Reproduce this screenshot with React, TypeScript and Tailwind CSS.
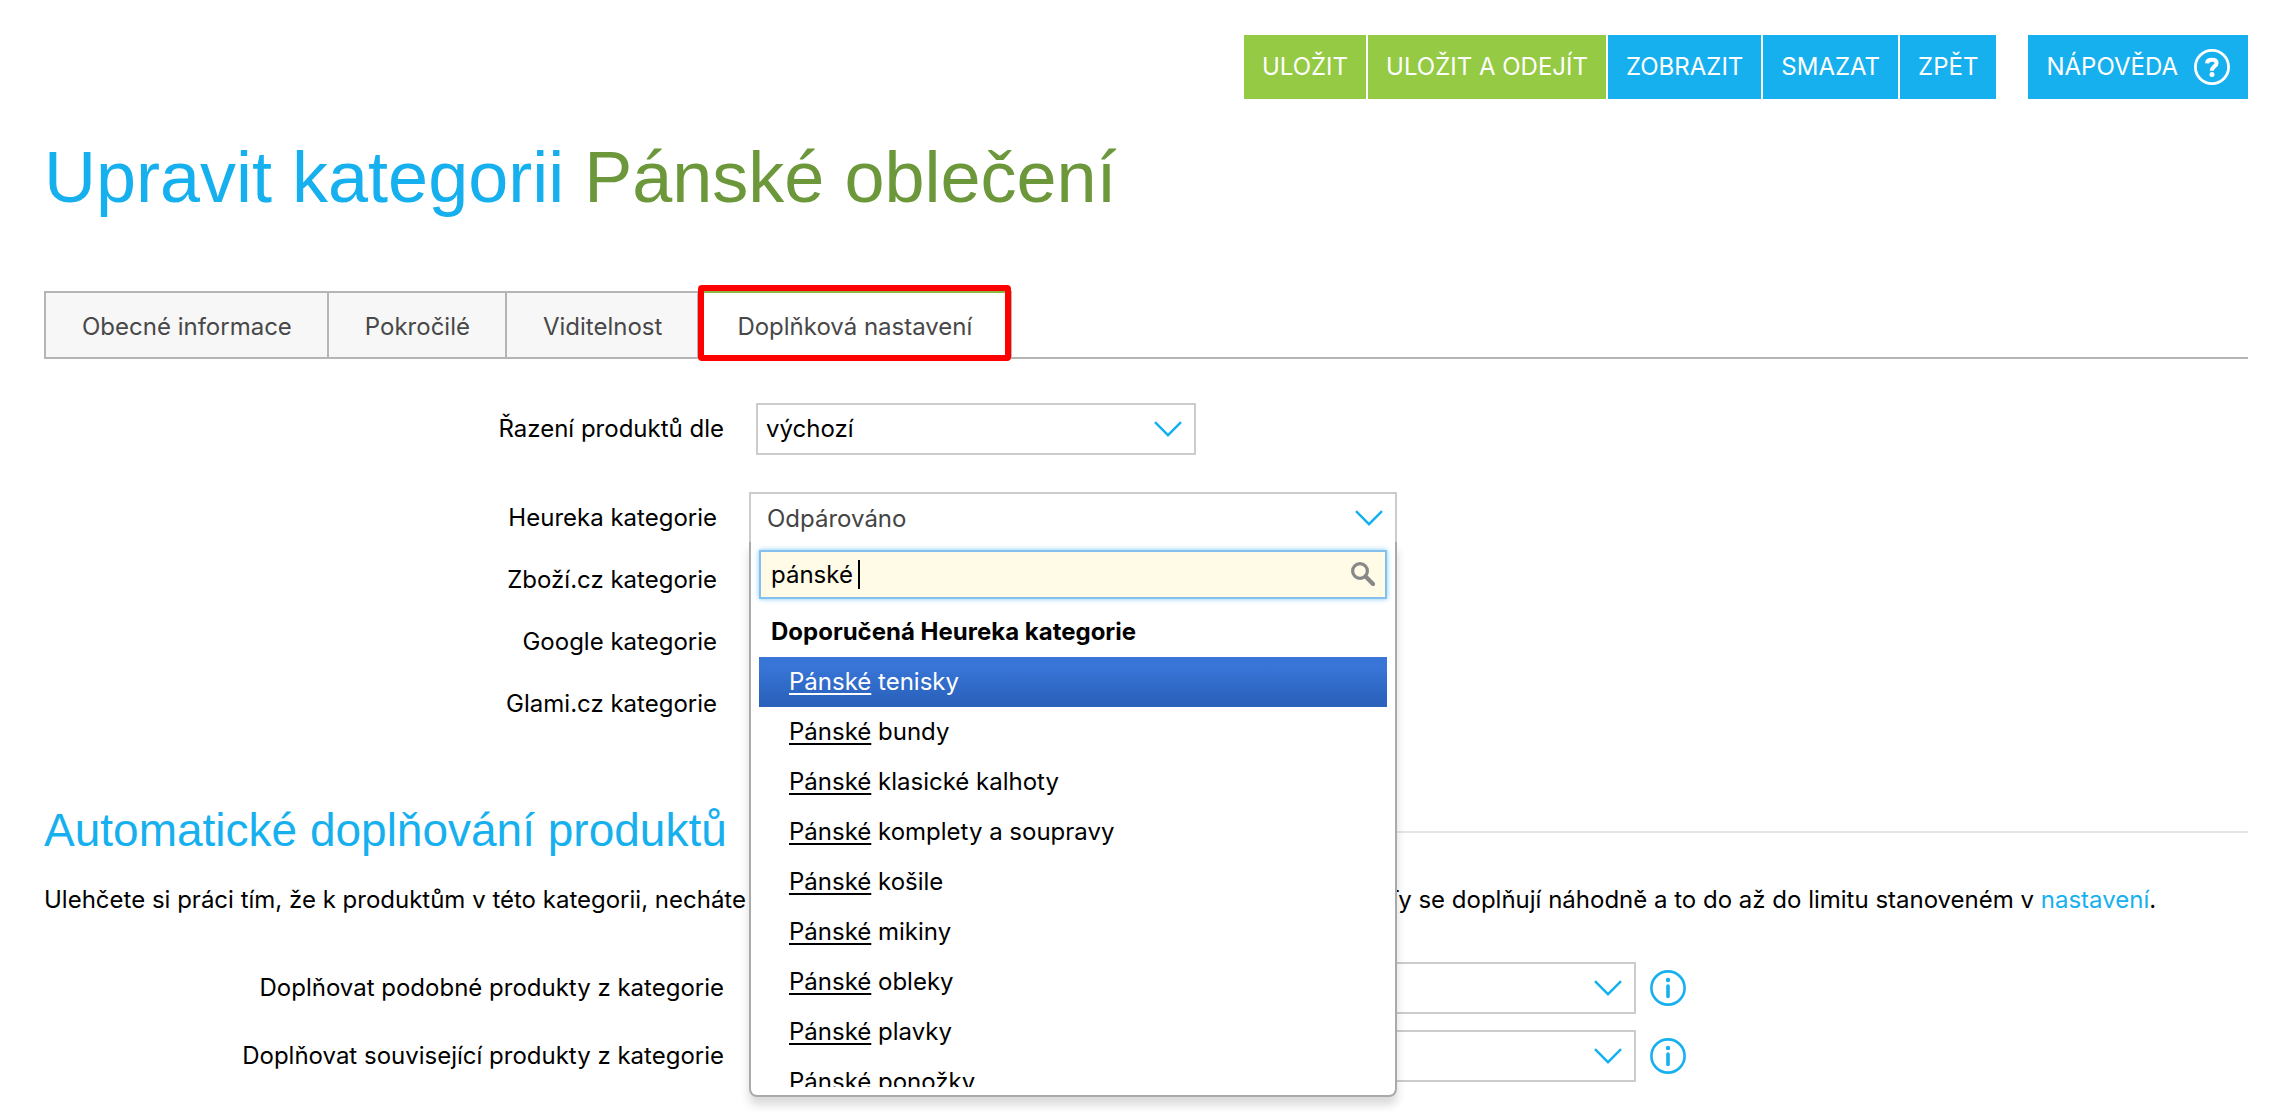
import { useState } from "react";

const tabs = ["Obecné informace", "Pokročilé", "Viditelnost", "Doplňková nastavení"];

const heurekaOptions = [
  "tenisky",
  "bundy",
  "klasické kalhoty",
  "komplety a soupravy",
  "košile",
  "mikiny",
  "obleky",
  "plavky",
  "ponožky",
];

const pairings = [
  { id: "zbozi", label: "Zboží.cz kategorie" },
  { id: "google", label: "Google kategorie" },
  { id: "glami", label: "Glami.cz kategorie" },
];

function Chevron() {
  return (
    <svg
      className="pointer-events-none absolute top-1/2 right-[14px] h-4 w-7 -translate-y-1/2"
      viewBox="0 0 28 16"
      fill="none"
      stroke="#14b1ef"
      strokeWidth="2.4"
    >
      <path d="M1 1.2L14 14.2L27 1.2" />
    </svg>
  );
}

function HelpIcon() {
  return (
    <svg className="h-9 w-9" viewBox="0 0 36 36" fill="none" stroke="currentColor">
      <circle cx="18" cy="18" r="16.6" strokeWidth="2.8" />
      <path
        d="M13 14.4C13.2 11.8 15 10.8 18 10.8C21 10.8 22.6 12 22.6 14.2C22.6 17.4 17.9 17 17.9 21.8"
        strokeWidth="4"
      />
      <circle cx="18" cy="25.6" r="2.5" fill="currentColor" stroke="none" />
    </svg>
  );
}

function InfoIcon() {
  return (
    <svg className="h-9 w-9" viewBox="0 0 36 36" fill="none" stroke="currentColor">
      <circle cx="18" cy="18" r="16.6" strokeWidth="2.6" />
      <circle cx="18" cy="10" r="2.2" fill="currentColor" stroke="none" />
      <path d="M18 16V26.4" strokeWidth="3.6" strokeLinecap="round" />
    </svg>
  );
}

function SearchIcon() {
  return (
    <svg
      className="pointer-events-none absolute top-3 right-3 h-6 w-6"
      viewBox="0 0 24 24"
      fill="none"
      stroke="#888"
    >
      <circle cx="9" cy="9" r="7.4" strokeWidth="3.2" />
      <path d="M14.6 14.6L22 22" strokeWidth="4.2" strokeLinecap="round" />
    </svg>
  );
}

interface SelectBoxProps {
  id: string;
  value: string;
  className: string;
}

function SelectBox({ id, value, className }: SelectBoxProps) {
  return (
    <div className={`relative ${className}`}>
      <select
        id={id}
        defaultValue={value}
        className="h-[52px] w-full appearance-none border-2 border-[#ccc] bg-white pr-12 pl-2 text-black focus:outline-none"
      >
        <option>{value}</option>
      </select>
      <Chevron />
    </div>
  );
}

function HeurekaPicker() {
  const [query, setQuery] = useState("pánské ");
  const [active, setActive] = useState(0);

  return (
    <div className="relative z-10 w-[648px]">
      <button
        id="heureka"
        type="button"
        aria-haspopup="listbox"
        aria-expanded="true"
        className="block h-[52px] w-full border-2 border-b-0 border-[#ccc] bg-white px-4 text-left text-[#444]"
      >
        Odpárováno
      </button>
      <Chevron />

      <div className="absolute top-[50px] left-0 w-full rounded-b-lg border-2 border-t-0 border-[#aaa] bg-white p-2 shadow-[0_8px_10px_rgba(0,0,0,0.15)]">
        <div className="relative">
          <input
            type="text"
            aria-label="Hledat kategorii"
            value={query}
            onChange={(e) => setQuery(e.target.value)}
            className="block h-[49px] w-full border-2 border-[#84bfee] bg-[#fffbe6] pr-12 pl-[10px] text-black shadow-[0_0_5px_#7ccbf5] focus:outline-none"
          />
          {/* Caret */}
          <span className="absolute top-[10px] left-[99px] h-[29px] w-[2px] bg-black" />
          <SearchIcon />
        </div>

        <ul role="listbox" className="mt-2 h-[480px] overflow-hidden">
          <li className="h-[50px] px-3 leading-[50px] font-bold">Doporučená Heureka kategorie</li>
          {heurekaOptions.map((name, i) => (
            <li
              key={name}
              role="option"
              aria-selected={i === active}
              onMouseEnter={() => setActive(i)}
              className={`h-[50px] px-[30px] leading-[50px] ${
                i === active
                  ? "bg-linear-to-b from-[#3875d7] from-20% to-[#2a62bc] to-90% text-white"
                  : ""
              }`}
            >
              <span className="underline decoration-2 underline-offset-[3px]">Pánské</span> {name}
            </li>
          ))}
        </ul>
      </div>
    </div>
  );
}

export default function App() {
  return (
    <div className="bg-white pt-[35px] pr-10 pb-8 pl-11 font-['Inter',sans-serif] text-[24px] leading-9 text-black">
      {/* Toolbar */}
      <div className="flex justify-end gap-[2px] text-white">
        <button type="button" className="h-16 bg-[#95ca44] px-[18px]">ULOŽIT</button>
        <button type="button" className="h-16 bg-[#95ca44] px-[18px]">ULOŽIT A ODEJÍT</button>
        <button type="button" className="h-16 bg-[#17b0ef] px-[18px]">ZOBRAZIT</button>
        <button type="button" className="h-16 bg-[#17b0ef] px-[18px]">SMAZAT</button>
        <button type="button" className="h-16 bg-[#17b0ef] px-[18px]">ZPĚT</button>
        <button type="button" className="ml-[30px] flex h-16 items-center gap-4 bg-[#17b0ef] px-[18px]">
          NÁPOVĚDA
          <HelpIcon />
        </button>
      </div>

      <h1 className="mt-[38px] font-['Liberation_Sans',sans-serif] text-[72px] leading-[80px] text-[#17b0ef]">
        Upravit kategorii <span className="text-[#6c983b]">Pánské oblečení</span>
      </h1>

      {/* Tabs */}
      <div role="tablist" className="mt-[74px] flex h-[68px] border-b-2 border-[#b5b5b5] text-[#484848]">
        {tabs.slice(0, 3).map((tab) => (
          <button
            key={tab}
            type="button"
            role="tab"
            aria-selected="false"
            className="border-t-2 border-l-2 border-[#b5b5b5] bg-[#f7f7f7] pt-1 pr-[35px] pl-9"
          >
            {tab}
          </button>
        ))}
        <button
          type="button"
          role="tab"
          aria-selected="true"
          className="relative border-x-2 border-t-2 border-x-[#b5b5b5] border-t-[#8ab83f] bg-white px-[38px] pt-1"
        >
          {tabs[3]}
          <span className="absolute -inset-x-px -top-2 -bottom-1 rounded-[4px] border-6 border-[#f00]" />
        </button>
      </div>

      {/* Settings */}
      <div className="mt-11 grid grid-cols-[680px_1fr] items-center gap-x-8">
        <label htmlFor="sort" className="text-right">Řazení produktů dle</label>
        <SelectBox id="sort" value="výchozí" className="w-[440px]" />
      </div>

      <div className="mt-[37px] grid grid-cols-[673px_1fr] items-center gap-x-8 gap-y-[10px]">
        <label htmlFor="heureka" className="text-right">Heureka kategorie</label>
        <HeurekaPicker />
        {pairings.map((p) => (
          <div key={p.id} className="contents">
            <label htmlFor={p.id} className="text-right">{p.label}</label>
            <SelectBox id={p.id} value="Odpárováno" className="w-[640px]" />
          </div>
        ))}
      </div>

      {/* Automatic filling */}
      <div className="mt-[76px] flex items-center gap-6">
        <h2 className="pb-1 font-['Liberation_Sans',sans-serif] text-[46px] leading-[48px] text-[#17b0ef]">
          Automatické doplňování produktů
        </h2>
        <hr className="flex-1 border-t-2 border-[#e5e5e5]" />
      </div>
      <p className="mt-6">
        Ulehčete si práci tím, že k produktům v této kategorii, necháte automaticky doplňovat podobné
        a související produkty. Ty se doplňují náhodně a to do až do limitu stanoveném v{" "}
        <a href="#nastaveni" className="text-[#17b0ef]">nastavení</a>.
      </p>

      <div className="mt-11 grid grid-cols-[680px_1fr] items-center gap-x-8 gap-y-4">
        <label htmlFor="similar" className="text-right">Doplňovat podobné produkty z kategorie</label>
        <div className="flex items-center gap-[14px]">
          <SelectBox id="similar" value="této" className="w-[880px]" />
          <button type="button" aria-label="Informace" className="text-[#17b0ef]"><InfoIcon /></button>
        </div>
        <label htmlFor="related" className="text-right">Doplňovat související produkty z kategorie</label>
        <div className="flex items-center gap-[14px]">
          <SelectBox id="related" value="této" className="w-[880px]" />
          <button type="button" aria-label="Informace" className="text-[#17b0ef]"><InfoIcon /></button>
        </div>
      </div>
    </div>
  );
}
